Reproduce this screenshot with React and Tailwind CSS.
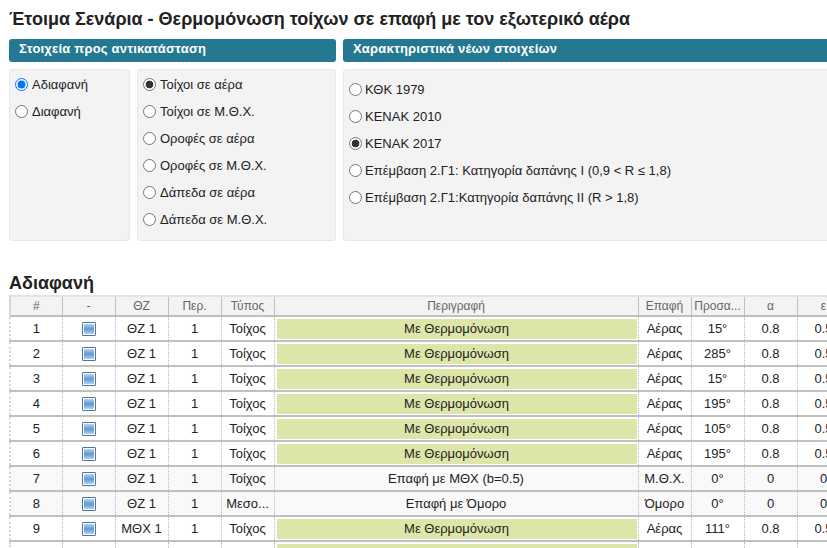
const rows = [
  ["1", "ΘΖ 1", "1", "Τοίχος", "Με Θερμομόνωση", true, "Αέρας", "15°", "0.8", "0.5"],
  ["2", "ΘΖ 1", "1", "Τοίχος", "Με Θερμομόνωση", true, "Αέρας", "285°", "0.8", "0.5"],
  ["3", "ΘΖ 1", "1", "Τοίχος", "Με Θερμομόνωση", true, "Αέρας", "15°", "0.8", "0.5"],
  ["4", "ΘΖ 1", "1", "Τοίχος", "Με Θερμομόνωση", true, "Αέρας", "195°", "0.8", "0.5"],
  ["5", "ΘΖ 1", "1", "Τοίχος", "Με Θερμομόνωση", true, "Αέρας", "105°", "0.8", "0.5"],
  ["6", "ΘΖ 1", "1", "Τοίχος", "Με Θερμομόνωση", true, "Αέρας", "195°", "0.8", "0.5"],
  ["7", "ΘΖ 1", "1", "Τοίχος", "Επαφή με ΜΘΧ (b=0.5)", false, "Μ.Θ.Χ.", "0°", "0", "0"],
  ["8", "ΘΖ 1", "1", "Μεσο...", "Επαφή με Όμορο", false, "Όμορο", "0°", "0", "0"],
  ["9", "ΜΘΧ 1", "1", "Τοίχος", "Με Θερμομόνωση", true, "Αέρας", "111°", "0.8", "0.5"],
  ["", "", "", "", "", true, "", "", "", ""],
];

const headers = ["#", "-", "ΘΖ", "Περ.", "Τύπος", "Περιγραφή", "Επαφή", "Προσα...", "α", "ε"];

function Radio({ label, checked, blue, gap = "mr-[4px]" }) {
  return (
    <label className="flex items-center h-[27px]">
      <input
        type="radio"
        defaultChecked={checked}
        className={`m-0 ${gap} w-[13px] h-[13px] shrink-0 ${
          blue
            ? "accent-[#0075ff]"
            : "appearance-none rounded-full border border-[#767676] bg-white checked:bg-[radial-gradient(circle,#333333_0,#333333_3.5px,#ffffff_4.2px)]"
        }`}
      />
      <span>{label}</span>
    </label>
  );
}

function RowIcon() {
  return (
    <span className="inline-block align-middle w-[14px] h-[14px] border border-[#4f74ab] rounded-[1px] bg-white p-px">
      <span className="block w-full h-full bg-gradient-to-b from-[#b5d5ef] via-[#5f97cf] to-[#b0d2ee]" />
    </span>
  );
}

export default function App() {
  return (
    <div className="w-[827px] h-[548px] overflow-hidden bg-white text-[13px] text-[#222] font-['Liberation_Sans',Arial,sans-serif]">
      <h1 className="pl-[9px] pt-[9px] h-[39px] text-[18px] leading-[20px] font-bold text-[#222]">
        Έτοιμα Σενάρια - Θερμομόνωση τοίχων σε επαφή με τον εξωτερικό αέρα
      </h1>

      <div className="flex pl-[9px] gap-[7px] w-[900px]">
        <div className="w-[327px]">
          <div className="h-[23px] bg-[#247892] rounded-[3px] pl-[10px] text-white font-bold leading-[20px] tracking-[0.2px]">
            Στοιχεία προς αντικατάσταση
          </div>
          <div className="flex gap-[7px] mt-[7px]">
            <div className="w-[121px] h-[172px] bg-[#f3f3f3] border border-[#e8e8e8] rounded-[3px] pl-[5px] pt-[1px]">
              <Radio label="Αδιαφανή" checked blue />
              <Radio label="Διαφανή" />
            </div>
            <div className="w-[199px] h-[172px] bg-[#f3f3f3] border border-[#e8e8e8] rounded-[3px] pl-[5px] pt-[1px]">
              <Radio label="Τοίχοι σε αέρα" checked />
              <Radio label="Τοίχοι σε Μ.Θ.Χ." />
              <Radio label="Οροφές σε αέρα" />
              <Radio label="Οροφές σε Μ.Θ.Χ." />
              <Radio label="Δάπεδα σε αέρα" />
              <Radio label="Δάπεδα σε Μ.Θ.Χ." />
            </div>
          </div>
        </div>
        <div className="w-[520px]">
          <div className="h-[23px] bg-[#247892] rounded-[3px] pl-[10px] text-white font-bold leading-[20px] tracking-[0.2px]">
            Χαρακτηριστικά νέων στοιχείων
          </div>
          <div className="h-[172px] mt-[7px] bg-[#f3f3f3] border border-[#e8e8e8] rounded-[3px] pl-[5px] pt-[6px]">
            <Radio gap="mr-[3px]" label="ΚΘΚ 1979" />
            <Radio gap="mr-[3px]" label="ΚΕΝΑΚ 2010" />
            <Radio gap="mr-[3px]" label="ΚΕΝΑΚ 2017" checked />
            <Radio gap="mr-[3px]" label="Επέμβαση 2.Γ1: Κατηγορία δαπάνης Ι (0,9 < R ≤ 1,8)" />
            <Radio gap="mr-[3px]" label="Επέμβαση 2.Γ1:Κατηγορία δαπάνης ΙΙ (R > 1,8)" />
          </div>
        </div>
      </div>

      <h2 className="pl-[9px] mt-[30px] h-[24px] text-[18px] leading-[24px] font-bold text-[#222]">Αδιαφανή</h2>

      <div className="pl-[9px] w-[900px]">
        <table className="table-fixed border-collapse w-[840px] text-center">
          <colgroup>
            <col className="w-[52px]" />
            <col className="w-[53px]" />
            <col className="w-[53px]" />
            <col className="w-[53px]" />
            <col className="w-[53px]" />
            <col className="w-[364px]" />
            <col className="w-[53px]" />
            <col className="w-[53px]" />
            <col className="w-[53px]" />
            <col className="w-[53px]" />
          </colgroup>
          <thead>
            <tr className="h-[20px] bg-[#f3f3f3] border-t-2 border-[#e3e3e3]">
              {headers.map((h) => (
                <th key={h} className="font-normal text-[12px] text-[#666] border-x border-x-[#c0c0c0] first:border-l-2 first:border-l-[#d8d8d8] p-0 whitespace-nowrap overflow-hidden">
                  {h}
                </th>
              ))}
            </tr>
          </thead>
          <tbody>
            {rows.map((r, i) => (
              <tr key={i} className={`h-[25px] border-t-2 border-[#c0c0c0] ${r[5] ? "bg-white" : "bg-[#f9f9f9]"}`}>
                <td className="border-r border-dotted border-r-[#b8b8b8] border-l-2 border-l-[#d8d8d8] p-0">{r[0]}</td>
                <td className="border-r border-dotted border-r-[#b8b8b8] p-0"><RowIcon /></td>
                <td className="border-r border-dotted border-r-[#b8b8b8] p-0">{r[1]}</td>
                <td className="border-r border-dotted border-r-[#b8b8b8] p-0">{r[2]}</td>
                <td className="border-r border-dotted border-r-[#b8b8b8] p-0 whitespace-nowrap">{r[3]}</td>
                <td className="border-r border-dotted border-r-[#b8b8b8] p-0">
                  {r[5] ? (
                    <div className="ml-[2px] mr-[1px] h-[20px] leading-[20px] bg-[#dde6a8]">{r[4]}</div>
                  ) : (
                    r[4]
                  )}
                </td>
                <td className="border-r border-dotted border-r-[#b8b8b8] p-0">{r[6]}</td>
                <td className="border-r border-dotted border-r-[#b8b8b8] p-0">{r[7]}</td>
                <td className="border-r border-dotted border-r-[#b8b8b8] p-0">{r[8]}</td>
                <td className="border-r border-dotted border-r-[#b8b8b8] p-0">{r[9]}</td>
              </tr>
            ))}
          </tbody>
        </table>
      </div>
    </div>
  );
}
